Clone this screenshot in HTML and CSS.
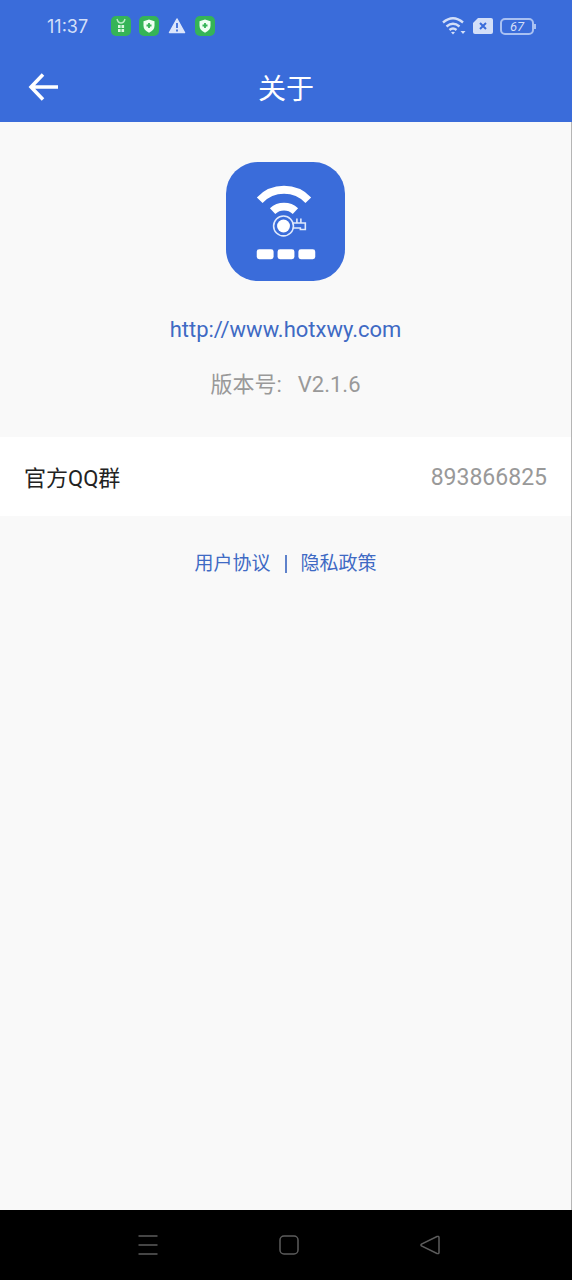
FILE: index.html
```
<!DOCTYPE html>
<html lang="zh-CN">
<head>
<meta charset="utf-8">
<meta name="viewport" content="width=device-width, initial-scale=1">
<title>关于</title>
<link rel="stylesheet" href="styles.css">
</head>
<body>
<div class="status-bar">
  <span class="clock">11:37</span>
  <div class="status-left">
    <svg class="badge" viewBox="0 0 20 20"><rect width="20" height="20" rx="5" fill="#35b457"/><path d="M6 3Q7 7 10 7T14 3" fill="none" stroke="#b9edc5" stroke-width="1.4"/><path d="M7 9h2.600v3H7zM10.500 9h2.600v3h-2.600zM7 13h2.600v3H7zM10.500 13h2.600v3h-2.600z" fill="#d9f7df"/></svg>
    <svg class="badge" viewBox="0 0 20 20"><rect width="20" height="20" rx="5" fill="#35b457"/><path d="M10 3.500l5.500 1.700v4.600q0 4.400-5.500 6.900-5.500-2.500-5.500-6.900V5.200z" fill="#effff2"/><path d="M10 7v5M7.500 9.500h5" stroke="#35b457" stroke-width="1.800"/></svg>
    <svg class="badge" viewBox="0 0 20 20"><path d="M10 3L17.500 16.500H2.500z" fill="#dce6fb" stroke="#dce6fb" stroke-width="1.500" stroke-linejoin="round"/><path d="M10 7v5M10 13.500v2" stroke="#3a6cda" stroke-width="1.800"/></svg>
    <svg class="badge" viewBox="0 0 20 20"><rect width="20" height="20" rx="5" fill="#35b457"/><path d="M10 3.500l5.500 1.700v4.600q0 4.400-5.500 6.900-5.500-2.500-5.500-6.900V5.200z" fill="#effff2"/><path d="M10 7v5M7.500 9.500h5" stroke="#35b457" stroke-width="1.800"/></svg>
  </div>
  <div class="status-right">
    <svg class="wifi" viewBox="0 0 24 20" fill="none" stroke="#d3dff8" stroke-width="2.400"><path d="M1 6.500Q11 -2 21 6.500M4.500 10.500Q11 5 17.500 10.500M7.500 14Q11 11 14.500 14"/><path d="M9 16.300Q11 15 13 16.300L11 18.500zM18.500 15h5L21 18z" fill="#d3dff8" stroke="none"/></svg>
    <svg class="sim" viewBox="0 0 20 16"><path d="M5 0h13q2 0 2 2v12q0 2-2 2H2q-2 0-2-2V5z" fill="#d3dff8"/><path d="M7 5l6 6M13 5l-6 6" stroke="#3a6cda" stroke-width="2"/></svg>
    <div class="battery"><span class="battery-level">67</span></div>
  </div>
</div>
<header class="app-bar">
  <button class="back" type="button" aria-label="返回">
    <svg class="back-icon" viewBox="0 0 30 28" fill="none" stroke="#fff" stroke-width="3.500"><path d="M15 1.500L3 14 15 26.500M3 14H30"/></svg>
  </button>
  <h1 class="title">关于</h1>
</header>
<main class="content">
  <section class="about">
    <svg class="logo" viewBox="0 0 120 120" aria-label="WiFi">
      <rect width="120" height="120" rx="32" fill="#3a6cda"/>
      <g fill="none" stroke="#fff" stroke-width="8"><path d="M34 38.500A34 34 0 0 1 83 38.500"/><path d="M47 49.500A17 17 0 0 1 70 49.500"/></g>
      <circle cx="58" cy="64.500" r="12" fill="#3a6cda"/>
      <path d="M67.500 61.500h12.500v6.500h-5v-1.500h-7.500M71.500 61.500V57M75.500 61.500V57" fill="none" stroke="#e0e9fc" stroke-width="1.600"/>
      <circle cx="58" cy="64.500" r="10" fill="#3a6cda" stroke="#e0e9fc" stroke-width="1.600"/>
      <circle cx="58" cy="64.500" r="6.500" fill="#fff"/>
      <g fill="#fff"><rect x="31" y="88" width="17" height="10" rx="2.500"/><rect x="52" y="88" width="17" height="10" rx="2.500"/><rect x="73" y="88" width="17" height="10" rx="2.500"/></g>
    </svg>
    <a class="site" href="http://www.hotxwy.com">http://www.hotxwy.com</a>
    <p class="version"><span>版本号:</span><span>V2.1.6</span></p>
  </section>
  <div class="row"><span class="row-label">官方QQ群</span><span class="row-value">893866825</span></div>
  <div class="legal"><a class="legal-link" href="#terms">用户协议</a><span class="divider"></span><a class="legal-link" href="#privacy">隐私政策</a></div>
</main>
<nav class="nav-bar">
  <button class="nav-button" type="button" aria-label="菜单"><svg class="nav-icon" viewBox="0 0 20 20"><path d="M0.500 1h19M0.500 10h19M0.500 19h19"/></svg></button>
  <button class="nav-button" type="button" aria-label="主页"><svg class="nav-icon" viewBox="0 0 20 20"><rect x="1" y="1" width="18" height="18" rx="4"/></svg></button>
  <button class="nav-button" type="button" aria-label="返回"><svg class="nav-icon" viewBox="0 0 20 20"><path d="M1.500 9Q0.500 10 1.500 11L17 18.500Q19 19 19 17.500V2.500Q19 1 17 1.500z"/></svg></button>
</nav>
</body>
</html>
```
FILE: styles.css
```
* { box-sizing: border-box; }
body {
  margin: 0;
  min-height: 100vh;
  display: flex;
  flex-direction: column;
  background: #f9f9f9;
  font-family: Roboto, "Noto Sans CJK SC", sans-serif;
}
button { border: 0; padding: 0; background: none; display: flex; }
a { text-decoration: none; color: #3f6ac4; }
.status-bar {
  height: 52px;
  padding: 0 36px 0 47px;
  display: flex;
  align-items: center;
  background: #3a6cda;
  color: #d3dff8;
}
.clock { font-family: Inter, sans-serif; font-size: 18px; width: 64px; }
.status-left { display: flex; gap: 8px; }
.badge { width: 20px; height: 20px; }
.status-right { display: flex; align-items: center; gap: 7px; margin-left: auto; }
.wifi { width: 24px; height: 20px; }
.sim { width: 20px; height: 16px; }
.battery {
  position: relative;
  width: 34px;
  height: 17px;
  margin-right: 2px;
  border: 2px solid #a9c1f2;
  border-radius: 5px;
  display: flex;
  align-items: center;
  justify-content: center;
}
.battery::after {
  content: "";
  position: absolute;
  right: -4px;
  top: 4px;
  width: 2px;
  height: 5px;
  background: #a9c1f2;
}
.battery-level { font-size: 13px; font-style: italic; line-height: 13px; }
.app-bar {
  height: 70px;
  padding: 0 28px;
  display: grid;
  grid-template-columns: 30px 1fr 30px;
  align-items: center;
  background: #3a6cda;
}
.back-icon { width: 30px; height: 28px; }
.title {
  margin: 0;
  padding-top: 6px;
  text-align: center;
  font-size: 28px;
  line-height: 40px;
  font-weight: 400;
  color: #fff;
}
.content { flex: 1; border-right: 1px solid #b5b5b5; }
.about {
  padding: 40px 0 36px;
  display: flex;
  flex-direction: column;
  align-items: center;
}
.logo { width: 119px; height: 119px; }
.site { margin-top: 33px; font-size: 22px; line-height: 32px; }
.version {
  margin: 23px 0 0;
  display: flex;
  gap: 16px;
  font-size: 22px;
  line-height: 32px;
  color: #999;
}
.row {
  height: 79px;
  padding: 0 24px;
  display: flex;
  align-items: center;
  justify-content: space-between;
  background: #fff;
  font-size: 22px;
}
.row-label { padding-bottom: 2px; color: #222; }
.row-value { padding-top: 2px; font-size: 23px; color: #999; }
.legal {
  margin-top: 34px;
  display: flex;
  justify-content: center;
  align-items: center;
  gap: 14px;
  font-size: 19px;
  line-height: 28px;
}
.divider { width: 2px; height: 18px; background: #5f82cb; }
.nav-bar {
  height: 70px;
  padding: 0 132px 0 138px;
  display: flex;
  align-items: center;
  justify-content: space-between;
  background: #000;
}
.nav-icon { width: 20px; height: 20px; fill: none; stroke: #5c5c5c; stroke-width: 1.5; }
```
